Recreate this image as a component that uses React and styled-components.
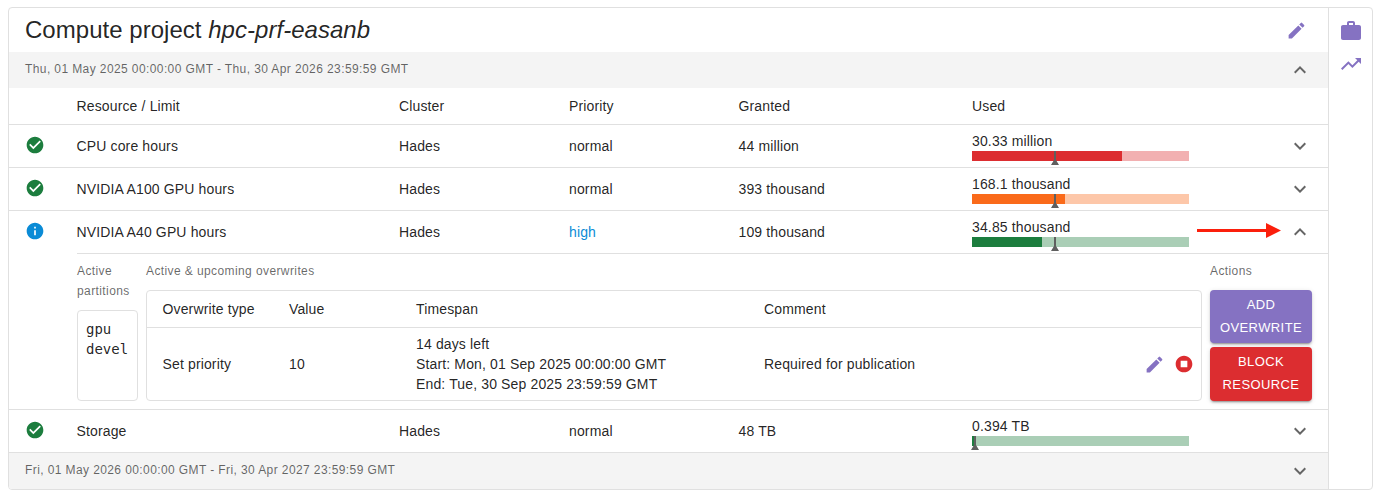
import React from "react";
import styled, { createGlobalStyle } from "styled-components";

const Global = createGlobalStyle`
  html, body { margin: 0; padding: 0; background: #fff; }
  body { font-family: "Liberation Sans", Arial, sans-serif; color: rgba(0,0,0,.87); }
`;

const PATHS = {
  edit: "M3 17.25V21h3.75L17.81 9.94l-3.75-3.75L3 17.25zM20.71 7.04c.39-.39.39-1.02 0-1.41l-2.34-2.34a.9959.9959 0 0 0-1.41 0l-1.83 1.83 3.75 3.75 1.83-1.83z",
  up: "m12 8-6 6 1.41 1.41L12 10.83l4.59 4.58L18 14z",
  down: "M16.59 8.59 12 13.17 7.41 8.59 6 10l6 6 6-6z",
  check: "M12 2C6.48 2 2 6.48 2 12s4.48 10 10 10 10-4.48 10-10S17.52 2 12 2zm-2 15-5-5 1.41-1.41L10 14.17l7.59-7.59L19 8l-9 9z",
  info: "M12 2C6.48 2 2 6.48 2 12s4.48 10 10 10 10-4.48 10-10S17.52 2 12 2zm1 15h-2v-6h2v6zm0-8h-2V7h2v2z",
  work: "M20 6h-4V4c0-1.11-.89-2-2-2h-4c-1.11 0-2 .89-2 2v2H4c-1.11 0-1.99.89-1.99 2L2 19c0 1.11.89 2 2 2h16c1.11 0 2-.89 2-2V8c0-1.11-.89-2-2-2zm-6 0h-4V4h4v2z",
  trend: "m16 6 2.29 2.29-4.88 4.88-4-4L2 16.59 3.41 18l6-6 4 4 6.3-6.29L22 12V6z",
  stop: "M12 2C6.48 2 2 6.48 2 12s4.48 10 10 10 10-4.48 10-10S17.52 2 12 2zm4 14H8V8h8v8z",
};

const Svg = styled.svg`
  display: block;
  flex: none;
  fill: currentColor;
  color: ${(p) => p.$color || "#666"};
`;
const Icon = ({ name, size = 24, color }) => (
  <Svg viewBox="0 0 24 24" width={size} height={size} $color={color}>
    <path d={PATHS[name]} />
  </Svg>
);

const PURPLE = "#8572c2";
const RED = "#dc2d30";
const ORANGE = "#fa6a1a";
const GREEN = "#1c7d3e";
const BLUE = "#0a8bd6";

const Page = styled.div`
  padding: 7px 10px 0 8px;
  width: 1365px;
  box-sizing: content-box;
`;
const Card = styled.div`
  display: flex;
  width: 1365px;
  height: 483px;
  box-sizing: border-box;
  background: #fff;
  border: 1px solid #e0e0e0;
  border-radius: 4px;
  overflow: hidden;
  position: relative;
`;
const Main = styled.div`
  width: 1319px;
  flex: none;
  display: flex;
  flex-direction: column;
  & > * { flex: none; }
`;
const Rail = styled.div`
  flex: 1;
  border-left: 1px solid #e0e0e0;
  display: flex;
  flex-direction: column;
  align-items: center;
  padding-top: 11px;
  gap: 9px;
`;
const TitleBar = styled.div`
  height: 44px;
  display: flex;
  align-items: center;
  justify-content: space-between;
  padding: 0 21px 0 16px;
`;
const Title = styled.h1`
  margin: 0;
  font-size: 24px;
  font-weight: 400;
  line-height: 44px;
  letter-spacing: 0.03px;
  em { font-style: italic; }
`;
const Period = styled.div`
  height: 36px;
  box-sizing: border-box;
  background: #f4f4f4;
  display: flex;
  align-items: center;
  justify-content: space-between;
  padding: 0 16px;
  font-size: 12px;
  letter-spacing: 0.4px;
  color: rgba(0,0,0,.6);
`;
const PeriodText = styled.span`
  margin-top: -2px;
`;
const Cols = styled.div`
  display: grid;
  grid-template-columns: 67.5px 322.5px 170px 169.5px 233.5px 217px 1fr;
  align-items: center;
  font-size: 14px;
  letter-spacing: 0.14px;
  box-sizing: border-box;
`;
const HeadRow = styled(Cols)`
  height: 37px;
  border-bottom: 1px solid #e0e0e0;
`;
const Row = styled(Cols)`
  height: ${(p) => (p.$open ? 42 : 43)}px;
  border-bottom: ${(p) => (p.$open ? "none" : "1px solid #e0e0e0")};
`;
const StatusCell = styled.div`
  padding-left: 16px;
  margin-top: -2px;
`;
const Chevron = styled.div`
  padding-left: 98.5px;
`;
const UsedCell = styled.div`
  display: flex;
  flex-direction: column;
  margin-top: -1px;
`;
const UsedText = styled.div`
  line-height: 14px;
  margin-bottom: 3px;
  margin-top: 3px;
`;
const Track = styled.div`
  position: relative;
  height: 10px;
  width: 217px;
  background: ${(p) => p.$color}60;
`;
const Fill = styled.div`
  height: 100%;
  background: ${(p) => p.$color};
`;
const Marker = styled.svg`
  position: absolute;
  top: 0;
  width: 8px;
  height: 14px;
  fill: #5f5f5f;
`;
const HighText = styled.span`
  color: ${BLUE};
`;

const DetailFrame = styled.div`
  height: 157px;
  box-sizing: border-box;
  border-bottom: 1px solid #e0e0e0;
`;
const Detail = styled.div`
  margin-left: 68px;
  height: 156px;
  box-sizing: border-box;
  border-top: 1px solid #e0e0e0;
  padding: 7px 16px 0 0;
  display: grid;
  grid-template-columns: 61px 1056px 102px;
  column-gap: 8px;
`;
const Column = styled.div`
  display: flex;
  flex-direction: column;
`;
const Label = styled.div`
  font-size: 12px;
  letter-spacing: 0.4px;
  line-height: 20px;
  margin-bottom: 9px;
  color: rgba(0,0,0,.6);
`;
const PartitionBox = styled.div`
  width: 61px;
  height: 91px;
  box-sizing: border-box;
  border: 1px solid #e0e0e0;
  border-radius: 4px;
  padding: 9px 0 0 8px;
  font-family: "DejaVu Sans Mono", "Liberation Mono", monospace;
  font-size: 14px;
  line-height: 19.5px;
`;
const OverTable = styled.div`
  height: 111px;
  box-sizing: border-box;
  border: 1px solid #e0e0e0;
  border-radius: 4px;
  font-size: 14px;
  letter-spacing: 0.14px;
`;
const OverGrid = styled.div`
  display: grid;
  grid-template-columns: 126.5px 127px 348px 1fr auto;
  align-items: center;
  padding: 0 7px 0 15.5px;
  box-sizing: border-box;
  height: ${(p) => p.$h}px;
  border-bottom: ${(p) => (p.$line ? "1px solid #e0e0e0" : "none")};
`;
const Lines = styled.div`
  line-height: 20px;
`;
const RowActions = styled.div`
  display: flex;
  align-items: center;
  gap: 9px;
`;
const Buttons = styled.div`
  display: flex;
  flex-direction: column;
  gap: 4px;
`;
const Btn = styled.button`
  width: 102px;
  height: ${(p) => p.$h}px;
  border: 0;
  border-radius: 4px;
  background: ${(p) => p.$bg};
  color: #fff;
  font-family: inherit;
  font-size: 13px;
  letter-spacing: 0.4px;
  line-height: 23px;
  padding: 0 6px 2px;
  text-transform: uppercase;
  box-shadow: 0 3px 1px -2px rgba(0,0,0,.2), 0 2px 2px 0 rgba(0,0,0,.14), 0 1px 5px 0 rgba(0,0,0,.12);
`;
const Arrow = styled.svg`
  position: absolute;
  left: 1188px;
  top: 215px;
  width: 84px;
  height: 15px;
`;

const data = [
  { name: "CPU core hours", prio: "normal", granted: "44 million", used: "30.33 million", color: RED, fill: 149.7, mark: 83 },
  { name: "NVIDIA A100 GPU hours", prio: "normal", granted: "393 thousand", used: "168.1 thousand", color: ORANGE, fill: 93, mark: 83 },
];

const UsedBar = ({ text, color, fill, mark }) => (
  <UsedCell>
    <UsedText>{text}</UsedText>
    <Track $color={color}>
      <Fill $color={color} style={{ width: fill }} />
      <Marker viewBox="0 0 8 14" style={{ left: mark - 4 }}>
        <path d="M3 0h2v9l3 5H0l3-5z" />
      </Marker>
    </Track>
  </UsedCell>
);

export default function App() {
  return (
    <>
      <Global />
      <Page>
        <Card>
          <Main>
            <TitleBar>
              <Title>
                Compute project <em>hpc-prf-easanb</em>
              </Title>
              <Icon name="edit" size={21} color={PURPLE} />
            </TitleBar>
            <Period>
              <PeriodText>Thu, 01 May 2025 00:00:00 GMT - Thu, 30 Apr 2026 23:59:59 GMT</PeriodText>
              <Icon name="up" />
            </Period>
            <HeadRow>
              <span />
              <span>Resource / Limit</span>
              <span>Cluster</span>
              <span>Priority</span>
              <span>Granted</span>
              <span>Used</span>
              <span />
            </HeadRow>
            {data.map((d) => (
              <Row key={d.name}>
                <StatusCell><Icon name="check" size={20} color={GREEN} /></StatusCell>
                <span>{d.name}</span>
                <span>Hades</span>
                <span>{d.prio}</span>
                <span>{d.granted}</span>
                <UsedBar text={d.used} color={d.color} fill={d.fill} mark={d.mark} />
                <Chevron><Icon name="down" /></Chevron>
              </Row>
            ))}
            <Row $open>
              <StatusCell><Icon name="info" size={20} color={BLUE} /></StatusCell>
              <span>NVIDIA A40 GPU hours</span>
              <span>Hades</span>
              <HighText>high</HighText>
              <span>109 thousand</span>
              <UsedBar text="34.85 thousand" color={GREEN} fill={70} mark={83} />
              <Chevron><Icon name="up" /></Chevron>
            </Row>
            <DetailFrame>
              <Detail>
                <Column>
                  <Label>Active partitions</Label>
                  <PartitionBox>gpu<br />devel</PartitionBox>
                </Column>
                <Column>
                  <Label>Active &amp; upcoming overwrites</Label>
                  <OverTable>
                    <OverGrid $h={37} $line>
                      <span>Overwrite type</span>
                      <span>Value</span>
                      <span>Timespan</span>
                      <span>Comment</span>
                      <span />
                    </OverGrid>
                    <OverGrid $h={72}>
                      <span>Set priority</span>
                      <span>10</span>
                      <Lines>
                        14 days left<br />
                        Start: Mon, 01 Sep 2025 00:00:00 GMT<br />
                        End: Tue, 30 Sep 2025 23:59:59 GMT
                      </Lines>
                      <span>Required for publication</span>
                      <RowActions>
                        <Icon name="edit" size={21} color={PURPLE} />
                        <Icon name="stop" size={20} color={RED} />
                      </RowActions>
                    </OverGrid>
                  </OverTable>
                </Column>
                <Column>
                  <Label>Actions</Label>
                  <Buttons>
                    <Btn $bg={PURPLE} $h={53}>Add overwrite</Btn>
                    <Btn $bg={RED} $h={54}>Block resource</Btn>
                  </Buttons>
                </Column>
              </Detail>
            </DetailFrame>
            <Row>
              <StatusCell><Icon name="check" size={20} color={GREEN} /></StatusCell>
              <span>Storage</span>
              <span>Hades</span>
              <span>normal</span>
              <span>48 TB</span>
              <UsedBar text="0.394 TB" color={GREEN} fill={3.5} mark={3} />
              <Chevron><Icon name="down" /></Chevron>
            </Row>
            <Period>
              <PeriodText>Fri, 01 May 2026 00:00:00 GMT - Fri, 30 Apr 2027 23:59:59 GMT</PeriodText>
              <Icon name="down" />
            </Period>
          </Main>
          <Rail>
            <Icon name="work" color={PURPLE} />
            <Icon name="trend" color={PURPLE} />
          </Rail>
          <Arrow viewBox="0 0 84 15">
            <path d="M0 6h69V0l15 7.5L69 15V9H0z" fill="#fb1f0c" />
          </Arrow>
        </Card>
      </Page>
    </>
  );
}
